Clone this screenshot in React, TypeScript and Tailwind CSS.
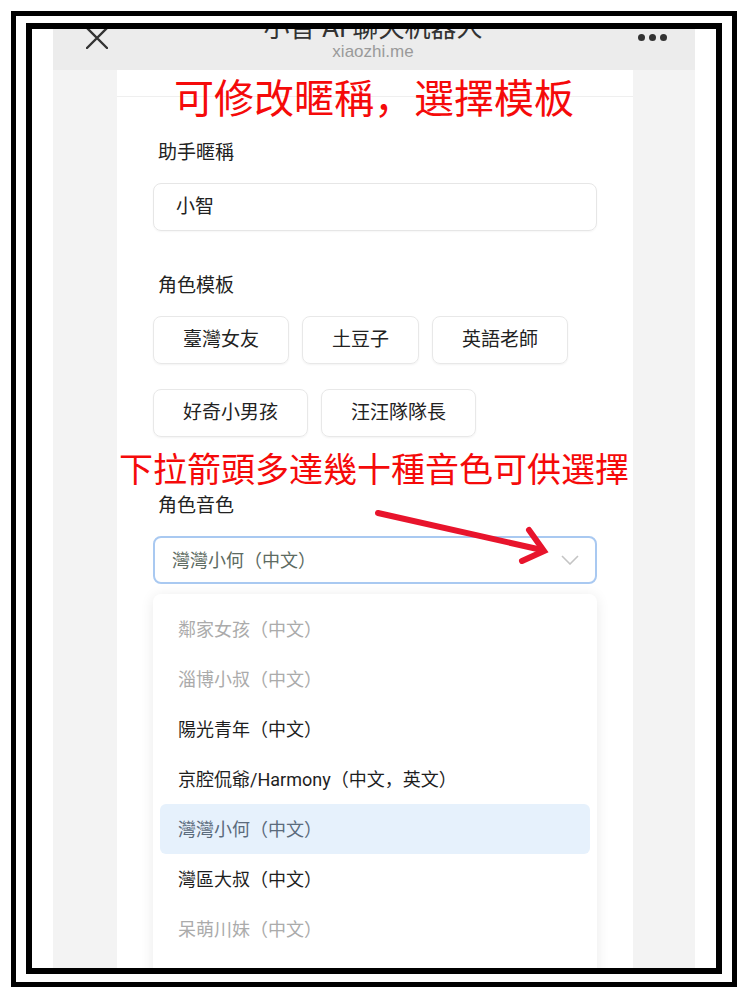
import React from "react";

const cjk = "font-['Roboto','Noto_Sans_CJK_SC',sans-serif]";

const templates = [["臺灣女友", "土豆子", "英語老師"], ["好奇小男孩", "汪汪隊隊長"]];

const voices: { name: string; tone: "muted" | "normal" | "active" }[] = [
  { name: "鄰家女孩（中文）", tone: "muted" },
  { name: "淄博小叔（中文）", tone: "muted" },
  { name: "陽光青年（中文）", tone: "normal" },
  { name: "京腔侃爺/Harmony（中文，英文）", tone: "normal" },
  { name: "灣灣小何（中文）", tone: "active" },
  { name: "灣區大叔（中文）", tone: "normal" },
  { name: "呆萌川妹（中文）", tone: "muted" },
  { name: "東北鐵哥（中文）", tone: "normal" },
];

function Label({ children }: { children: React.ReactNode }) {
  return <div className="pl-[5px] text-[19px] leading-[26px] text-[#222]">{children}</div>;
}

export default function App() {
  return (
    <div className={`w-[750px] h-[1000px] bg-white pt-[11px] pl-[11px] ${cjk}`}>
      {/* double frame */}
      <div className="w-[726px] h-[976px] border-[5px] border-black pt-[7px] pl-[10px]">
        <div className="w-[696px] h-[951px] border-[6px] border-black bg-white overflow-hidden">
          {/* phone screenshot */}
          <div className="relative mx-[21px] h-full bg-[#f3f3f3] flex flex-col">
            {/* nav bar */}
            <div className="h-[41px] shrink-0 bg-[#ececec] flex items-start justify-between pl-[33px] pr-[28px]">
              <svg width="22" height="22" viewBox="0 0 22 22" className="-mt-[2px]">
                <path d="M1 1 L21 21 M21 1 L1 21" stroke="#333" strokeWidth="2.4" strokeLinecap="round" />
              </svg>
              <div className="flex flex-col items-center">
                <div className="-mt-[14px] h-[26px] text-[26px] leading-[26px] text-[#333] whitespace-nowrap">
                  小智 AI 聊天机器人
                </div>
                <div className="mt-[1px] text-[17px] leading-[20px] text-[#9a9a9a] font-['Liberation_Sans',sans-serif]">
                  xiaozhi.me
                </div>
              </div>
              <div className="mt-[5px] flex gap-[4px]">
                <span className="w-[7px] h-[7px] rounded-full bg-[#333]" />
                <span className="w-[7px] h-[7px] rounded-full bg-[#333]" />
                <span className="w-[7px] h-[7px] rounded-full bg-[#333]" />
              </div>
            </div>

            {/* card */}
            <div className="ml-[64px] w-[516px] flex-1 bg-white px-[36px]">
              <div className="h-[27px] border-b border-[#efefef] -mx-[36px]" />

              <div className="pt-[43px]">
                <Label>助手暱稱</Label>
                <div className="mt-[17px] h-[48px] rounded-lg border border-[#e6e6e6] shadow-[0_1px_2px_rgba(0,0,0,0.04)] pl-[22px] flex items-center text-[19px] text-[#222]">
                  小智
                </div>
              </div>

              <div className="pt-[42px]">
                <Label>角色模板</Label>
                <div className="mt-[17px] flex flex-col gap-[25px]">
                  {templates.map((row, i) => (
                    <div key={i} className="flex gap-[13px]">
                      {row.map((t) => (
                        <div
                          key={t}
                          className="h-[48px] px-[29px] rounded-lg border border-[#e8e8e8] shadow-[0_1px_2px_rgba(0,0,0,0.05)] flex items-center text-[19px] text-[#222]"
                        >
                          {t}
                        </div>
                      ))}
                    </div>
                  ))}
                </div>
              </div>

              <div className="pt-[56px]">
                <Label>角色音色</Label>
                <div className="mt-[17px] h-[48px] rounded-lg border-2 border-[#a9c9f1] pl-[17px] pr-[16px] flex items-center justify-between">
                  <span className="text-[18px] text-[#5d6b62]">灣灣小何（中文）</span>
                  <svg width="18" height="10" viewBox="0 0 18 10">
                    <path d="M1 1 L9 9 L17 1" fill="none" stroke="#c4c4c4" strokeWidth="1.6" />
                  </svg>
                </div>

                {/* dropdown */}
                <div className="mt-[10px] rounded-lg bg-white shadow-[0_2px_14px_rgba(0,0,0,0.09)] pt-[10px] px-[7px]">
                  {voices.map((v) => (
                    <div
                      key={v.name}
                      className={
                        "h-[50px] pl-[18px] flex items-center rounded-md text-[18px] " +
                        (v.tone === "active"
                          ? "bg-[#e6f1fc] text-[#5b6b7c]"
                          : v.tone === "muted"
                          ? "text-[#ababab]"
                          : "text-[#1e1e1e]")
                      }
                    >
                      {v.name}
                    </div>
                  ))}
                </div>
              </div>
            </div>

            {/* annotations */}
            <div className="absolute left-0 right-0 top-[51px] text-center text-[40px] leading-[40px] text-[#f50a0a] whitespace-nowrap">
              可修改暱稱，選擇模板
            </div>
            <div className="absolute left-0 right-0 top-[424px] text-center text-[34px] leading-[34px] text-[#f50a0a] whitespace-nowrap">
              下拉箭頭多達幾十種音色可供選擇
            </div>
            <svg className="absolute left-0 top-0" width="642" height="600" viewBox="0 0 642 600">
              <path d="M325 484 L489 521" stroke="#e8142c" strokeWidth="6" strokeLinecap="round" />
              <path d="M476 501 L491 522 L469 532" fill="none" stroke="#e8142c" strokeWidth="6" strokeLinecap="round" strokeLinejoin="miter" />
            </svg>
          </div>
        </div>
      </div>
    </div>
  );
}
